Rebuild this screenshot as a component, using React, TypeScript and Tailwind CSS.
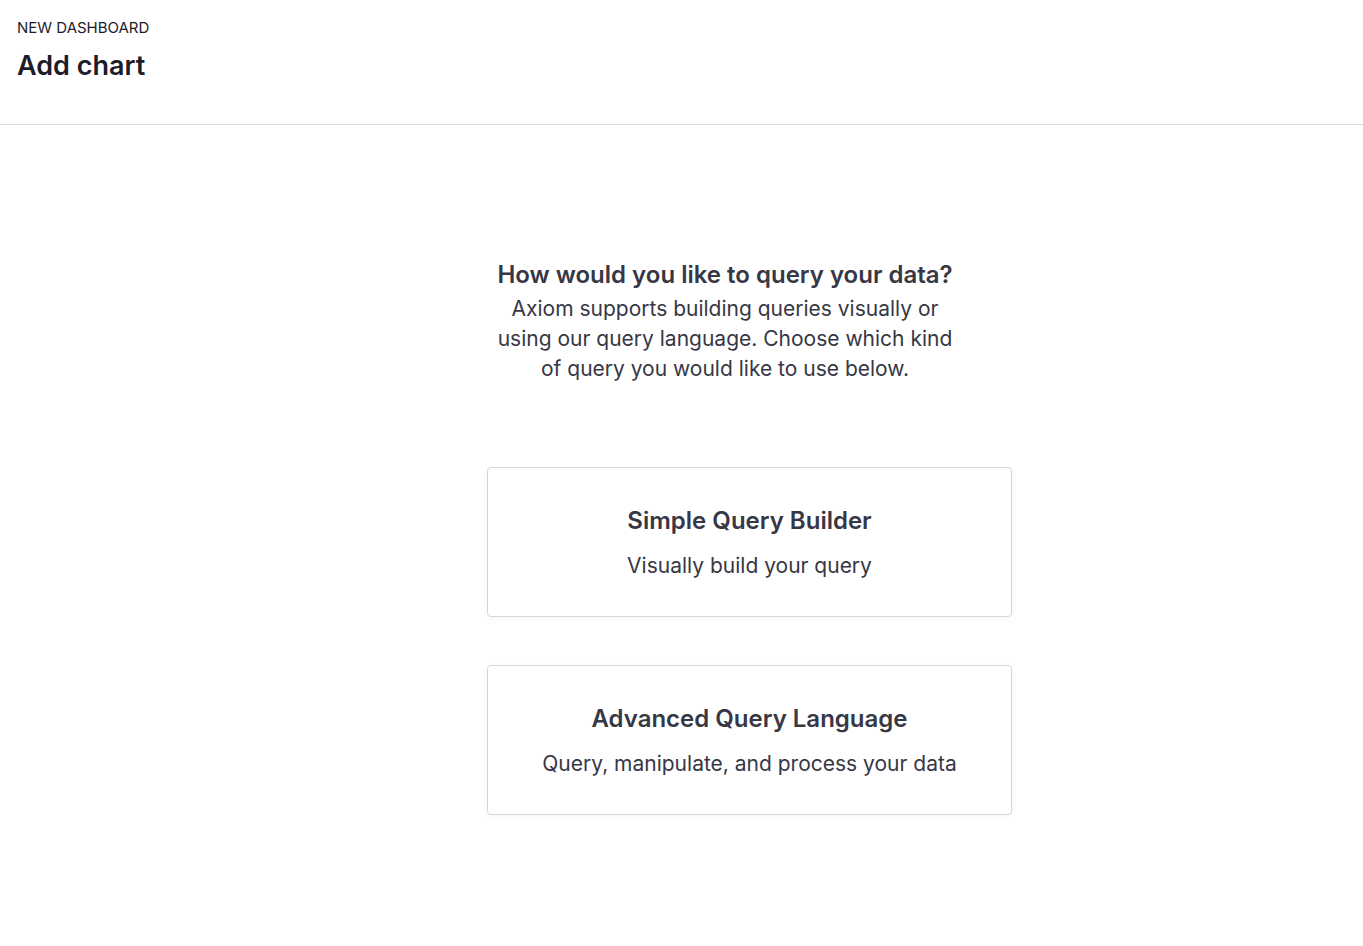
export default function App() {
    const options = [
        { title: "Simple Query Builder", text: "Visually build your query" },
        { title: "Advanced Query Language", text: "Query, manipulate, and process your data" },
    ];

    return (
        <div className="min-h-screen bg-white font-['Inter',sans-serif] text-[#373745]">
            <header className="border-b border-[#dadade] px-[17px] pt-[19px] h-[125px]">
                <div className="text-[15px] leading-[18px] text-[#1c1c2b]">NEW DASHBOARD</div>
                <h1 className="mt-[11px] text-[27px] leading-[36px] font-semibold text-[#1c1c2b]">Add chart</h1>
            </header>

            <main className="pt-[135px] pl-[487px]">
                <div className="w-[525px]">
                    <div className="ml-[8px] w-[460px] text-center">
                        <h2 className="text-[24px] leading-[30px] font-semibold">
                            How would you like to query your data?
                        </h2>
                        <p className="mt-[4px] text-[21px] leading-[30px]">
                            Axiom supports building queries visually or using our query language. Choose which kind
                            of query you would like to use below.
                        </p>
                    </div>

                    <div className="mt-[83px] flex flex-col gap-[48px]">
                        {options.map((item) => (
                            <button
                                key={item.title}
                                className="flex h-[150px] w-full flex-col items-center pt-[37px] rounded-[4px] border border-[#d6d6dc] bg-white shadow-[0_2px_6px_rgba(0,0,0,0.04)]"
                            >
                                <span className="text-[24px] leading-[32px] font-semibold">{item.title}</span>
                                <span className="mt-[14px] text-[21px] leading-[30px]">{item.text}</span>
                            </button>
                        ))}
                    </div>
                </div>
            </main>
        </div>
    );
}
